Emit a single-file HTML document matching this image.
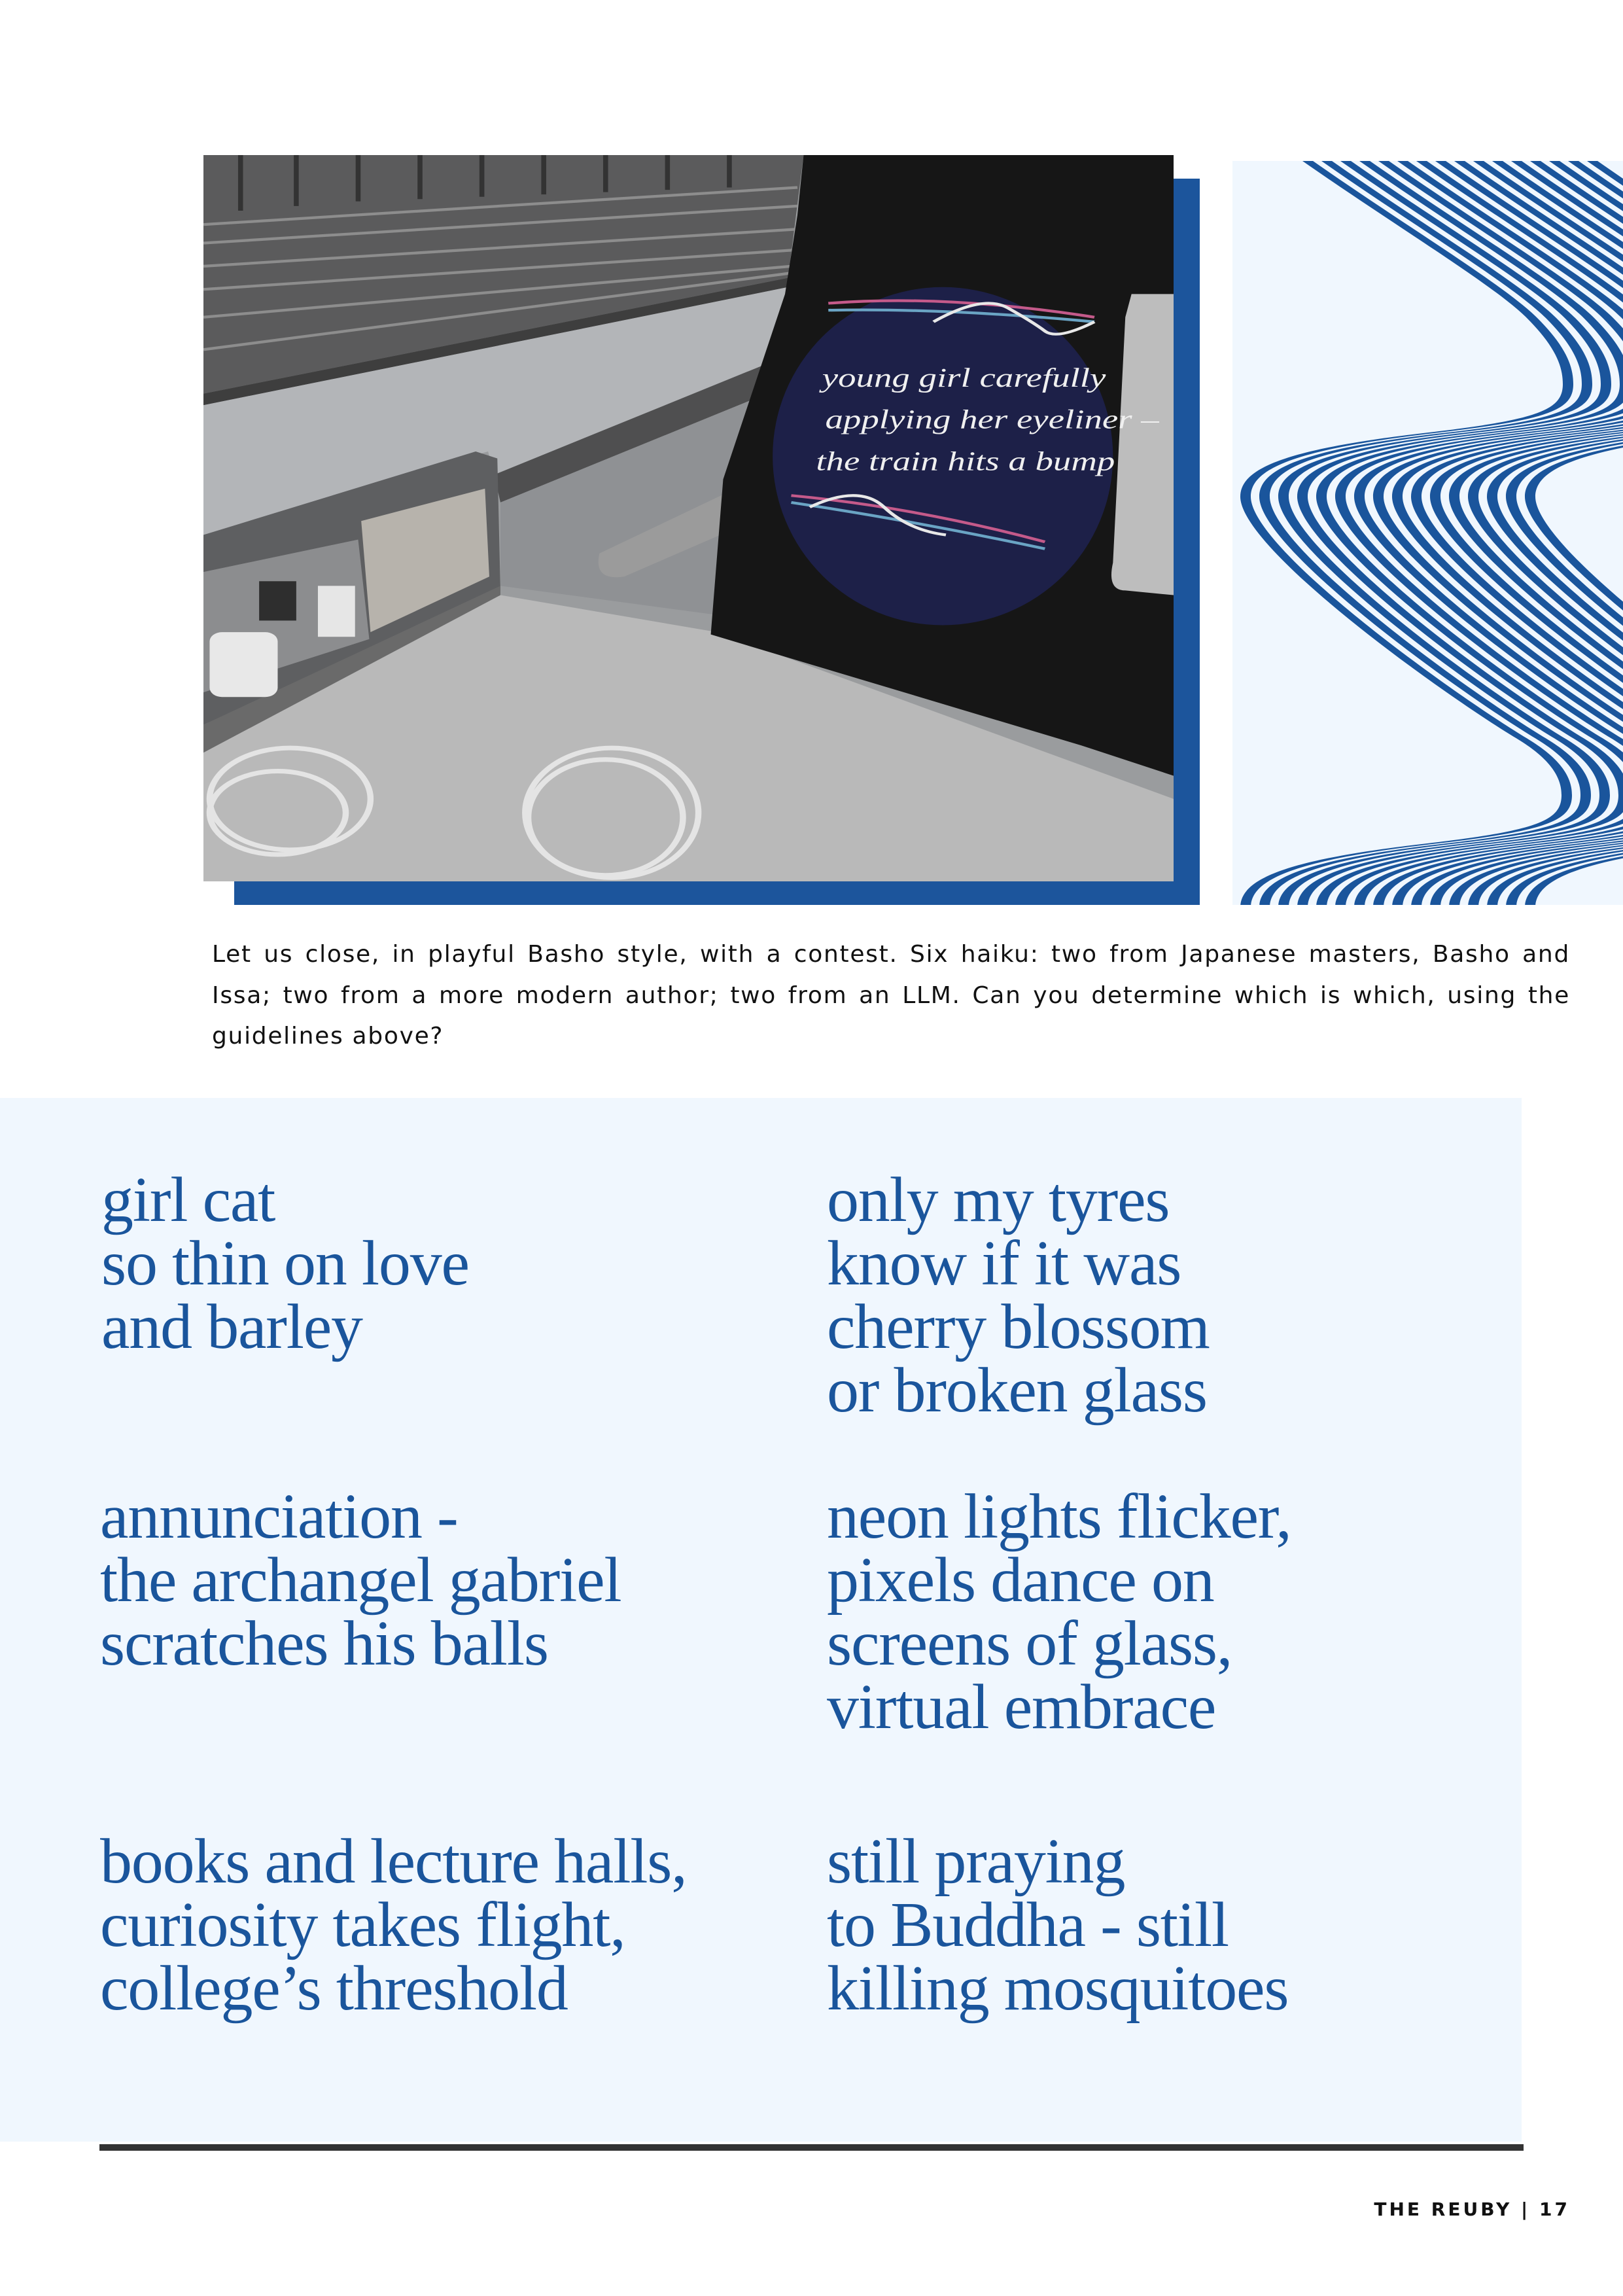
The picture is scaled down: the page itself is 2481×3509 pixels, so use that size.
<!DOCTYPE html>
<html><head><meta charset="utf-8">
<style>
html,body{margin:0;padding:0;background:#fff;}
body{width:2481px;height:3509px;position:relative;overflow:hidden;}
.abs{position:absolute;}
.para{left:324px;top:1428px;width:2076px;font-family:"DejaVu Sans","Liberation Sans",sans-serif;font-size:36px;line-height:62.5px;letter-spacing:1.7px;color:#111;text-align:justify;text-align-last:left;}
.haiku{font-family:"Liberation Serif",serif;font-size:98px;line-height:97px;color:#1a559c;letter-spacing:-1.2px;white-space:nowrap;}
.foot{right:81px;top:3360px;font-family:"DejaVu Sans","Liberation Sans",sans-serif;font-weight:bold;font-size:28px;letter-spacing:4px;color:#111;}
</style></head>
<body>
<div class="abs" style="left:358px;top:273px;width:1476px;height:1110px;background:#1c559c;"></div>
<svg class="abs" style="left:311px;top:237px" width="1483" height="1110" viewBox="0 0 1568 1568" preserveAspectRatio="none">
<rect width="1568" height="1568" fill="#9a9c9e"/>
<polygon points="0,0 970,0 945,265 0,515" fill="#5b5b5c"/>
<g stroke="#9a9a9a" stroke-width="6" opacity="0.8">
<line x1="0" y1="150" x2="960" y2="70"/><line x1="0" y1="190" x2="960" y2="110"/>
<line x1="0" y1="240" x2="960" y2="160"/><line x1="0" y1="290" x2="955" y2="205"/>
<line x1="0" y1="350" x2="950" y2="240"/><line x1="0" y1="420" x2="948" y2="255"/>
</g>
<g stroke="#333" stroke-width="8">
<line x1="60" y1="0" x2="60" y2="120"/><line x1="150" y1="0" x2="150" y2="110"/><line x1="250" y1="0" x2="250" y2="100"/><line x1="350" y1="0" x2="350" y2="95"/><line x1="450" y1="0" x2="450" y2="90"/><line x1="550" y1="0" x2="550" y2="85"/><line x1="650" y1="0" x2="650" y2="80"/><line x1="750" y1="0" x2="750" y2="75"/><line x1="850" y1="0" x2="850" y2="70"/>
</g>
<polygon points="0,515 945,265 945,285 0,540" fill="#3e3e3e"/>
<polygon points="0,540 945,285 930,440 470,690 460,640 0,820" fill="#b3b5b8"/>
<polygon points="470,690 930,440 920,510 480,750" fill="#4f4f50"/>
<polygon points="480,750 920,510 870,1000 480,930" fill="#8f9194"/>
<path d="M640,860 L860,720 Q890,710 880,760 L870,800 L680,910 Q630,920 640,860 Z" fill="#9b9b9b"/>
<polygon points="0,820 440,640 475,655 480,940 0,1230" fill="#5e5f61"/>
<polygon points="255,790 455,720 462,910 270,1030" fill="#b7b3ac"/>
<polygon points="0,900 250,830 268,1045 0,1160" fill="#8c8d8f"/>
<rect x="90" y="920" width="60" height="85" fill="#2e2e2e"/>
<rect x="185" y="930" width="60" height="110" fill="#e6e6e6"/>
<polygon points="0,1290 480,950 830,1030 1568,1390 1568,1568 0,1568" fill="#b9b9b9"/>
<polygon points="0,1230 480,930 480,950 0,1290" fill="#6a6a6a"/>
<g fill="none" stroke="#e4e4e4" stroke-width="10">
<ellipse cx="140" cy="1390" rx="130" ry="110"/><ellipse cx="120" cy="1420" rx="110" ry="90"/>
<ellipse cx="660" cy="1420" rx="140" ry="140"/><ellipse cx="650" cy="1430" rx="125" ry="125"/>
</g>
<rect x="10" y="1030" width="110" height="140" rx="20" fill="#e8e8e8"/>
<polygon points="970,0 1568,0 1568,1340 1420,1275 820,1035 840,700 940,300 960,130" fill="#161616"/>
<path d="M1500,300 L1568,300 L1568,950 L1490,940 Q1460,940 1470,880 L1490,350 Z" fill="#bdbdbd"/>
<ellipse cx="1195" cy="650" rx="275" ry="365" fill="#1d2048"/>
<g fill="none" stroke-width="6">
<path d="M1010,320 Q1200,300 1440,350" stroke="#c45a8a"/>
<path d="M1010,335 Q1200,330 1440,360" stroke="#6aa4c4"/>
<path d="M1180,360 Q1260,300 1300,330 T1360,380 T1440,360" stroke="#e8e8e8"/>
<path d="M950,735 Q1150,760 1360,835" stroke="#c45a8a"/>
<path d="M950,750 Q1150,790 1360,850" stroke="#6aa4c4"/>
<path d="M980,760 Q1060,710 1100,760 T1200,820" stroke="#e8e8e8"/>
</g>
<g font-family="Liberation Serif,serif" font-style="italic" font-size="58" fill="#f0f0f0">
<text x="1000" y="500">young girl carefully</text>
<text x="1005" y="590">applying her eyeliner –</text>
<text x="990" y="680">the train hits a bump</text>
</g>
</svg>
<svg class="abs" style="left:1884px;top:246px" width="597" height="1137" viewBox="0 0 597 1137">
<defs>
<path id="rg" d="M107,-60 L107,0 C250,100 400,190 450,240 C495,285 505,315 505,341 C505,380 470,395 300,415 C80,440 12,470 12,513 C12,590 300,800 430,880 C490,915 503,945 503,969 C503,1008 468,1023 298,1043 C78,1068 12,1098 12,1141 L12,1200 L1500,1200 L1500,-60 Z"/>
<clipPath id="cp"><rect width="597" height="1137"/></clipPath>
</defs>
<rect width="597" height="1137" fill="#f0f7fe"/>
<g clip-path="url(#cp)">
<use href="#rg" fill="#1a559c"/><use href="#rg" x="16" fill="#f0f7fe"/>
<use href="#rg" x="29" fill="#1a559c"/><use href="#rg" x="45" fill="#f0f7fe"/>
<use href="#rg" x="58" fill="#1a559c"/><use href="#rg" x="74" fill="#f0f7fe"/>
<use href="#rg" x="87" fill="#1a559c"/><use href="#rg" x="103" fill="#f0f7fe"/>
<use href="#rg" x="116" fill="#1a559c"/><use href="#rg" x="132" fill="#f0f7fe"/>
<use href="#rg" x="145" fill="#1a559c"/><use href="#rg" x="161" fill="#f0f7fe"/>
<use href="#rg" x="174" fill="#1a559c"/><use href="#rg" x="190" fill="#f0f7fe"/>
<use href="#rg" x="203" fill="#1a559c"/><use href="#rg" x="219" fill="#f0f7fe"/>
<use href="#rg" x="232" fill="#1a559c"/><use href="#rg" x="248" fill="#f0f7fe"/>
<use href="#rg" x="261" fill="#1a559c"/><use href="#rg" x="277" fill="#f0f7fe"/>
<use href="#rg" x="290" fill="#1a559c"/><use href="#rg" x="306" fill="#f0f7fe"/>
<use href="#rg" x="319" fill="#1a559c"/><use href="#rg" x="335" fill="#f0f7fe"/>
<use href="#rg" x="348" fill="#1a559c"/><use href="#rg" x="364" fill="#f0f7fe"/>
<use href="#rg" x="377" fill="#1a559c"/><use href="#rg" x="393" fill="#f0f7fe"/>
<use href="#rg" x="406" fill="#1a559c"/><use href="#rg" x="422" fill="#f0f7fe"/>
<use href="#rg" x="435" fill="#1a559c"/><use href="#rg" x="451" fill="#f0f7fe"/>
</g>
</svg>

<div class="abs para">Let us close, in playful Basho style, with a contest. Six haiku: two from Japanese masters, Basho and Issa; two from a more modern author; two from an LLM. Can you determine which is which, using the guidelines above?</div>

<div class="abs" style="left:0;top:1678px;width:2326px;height:1595px;background:#f0f7fe;"></div>
<div class="abs" style="left:152px;top:3277px;width:2177px;height:10px;background:#333;"></div>

<div class="abs haiku" style="left:155px;top:1786px;">girl cat<br>so thin on love<br>and barley</div>
<div class="abs haiku" style="left:1264px;top:1786px;">only my tyres<br>know if it was<br>cherry blossom<br>or broken glass</div>
<div class="abs haiku" style="left:153px;top:2270px;">annunciation -<br>the archangel gabriel<br>scratches his balls</div>
<div class="abs haiku" style="left:1264px;top:2270px;">neon lights flicker,<br>pixels dance on<br>screens of glass,<br>virtual embrace</div>
<div class="abs haiku" style="left:153px;top:2797px;">books and lecture halls,<br>curiosity takes flight,<br>college’s threshold</div>
<div class="abs haiku" style="left:1264px;top:2797px;">still praying<br>to Buddha - still<br>killing mosquitoes</div>

<div class="abs foot">THE REUBY | 17</div>
</body></html>
